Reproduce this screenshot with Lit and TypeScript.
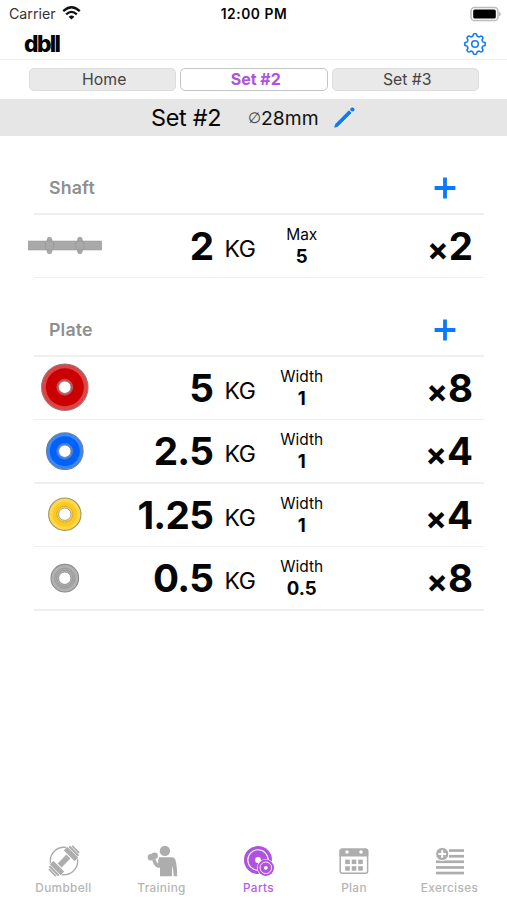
import { LitElement, html, css, svg } from "lit";
import { customElement, property } from "lit/decorators.js";
import { classMap } from "lit/directives/class-map.js";

interface Part {
  kind: "shaft" | "plate";
  weight: string;
  label: string;
  value: string;
  count: number;
  radius?: number;
  rim?: string;
  body?: string;
  edge?: string;
  core?: number;
}

const SHAFTS: Part[] = [{ kind: "shaft", weight: "2", label: "Max", value: "5", count: 2 }];

const PLATES: Part[] = [
  { kind: "plate", weight: "5", label: "Width", value: "1", count: 8, radius: 23.2, rim: "#dc4446", body: "#cb0003", edge: "#9b7474", core: 19 },
  { kind: "plate", weight: "2.5", label: "Width", value: "1", count: 4, radius: 18.3, rim: "#3b87f8", body: "#0062fb", edge: "#6c7f9d", core: 15 },
  { kind: "plate", weight: "1.25", label: "Width", value: "1", count: 4, radius: 16.2, rim: "#ffd84a", body: "#fdc91b", edge: "#a39670", core: 12.3 },
  { kind: "plate", weight: "0.5", label: "Width", value: "0.5", count: 8, radius: 13.8, rim: "#b2b2b2", body: "#a9a9a9", edge: "#8b8b8b", core: 10.2 },
];

const gearPath = (() => {
  const points: string[] = [];
  const steps = 128;
  for (let i = 0; i < steps; i++) {
    const a = (i / steps) * Math.PI * 2;
    const wave = Math.tanh(Math.cos(a * 8) * 2.2) / Math.tanh(2.2);
    const r = 9.15 + wave * 1.15;
    points.push(`${(12 + Math.sin(a) * r).toFixed(2)} ${(12 - Math.cos(a) * r).toFixed(2)}`);
  }
  return `M${points.join("L")}Z`;
})();

@customElement("part-icon")
export class PartIcon extends LitElement {
  @property({ attribute: false }) part!: Part;

  static styles = css`
    :host { display: block; height: 50px; }
    svg { display: block; }
  `;

  render() {
    const p = this.part;
    if (p.kind === "shaft") {
      return html`<svg width="76" height="50" viewBox="0 0 76 50">
        <g fill="#a9a9a9" stroke="#959595" stroke-width="0.7">
          <rect x="1.4" y="21.1" width="73" height="8.8" />
          <rect x="20.2" y="17.3" width="4.6" height="16.4" rx="2.2" />
          <rect x="50.6" y="17.3" width="4.6" height="16.4" rx="2.2" />
          <rect x="18.4" y="21.1" width="8.2" height="8.8" rx="2" />
          <rect x="48.8" y="21.1" width="8.2" height="8.8" rx="2" />
        </g>
      </svg>`;
    }
    return html`<svg width="76" height="50" viewBox="0 0 76 50">
      <circle cx="37.8" cy="25.2" r=${p.radius!} fill=${p.rim!} stroke=${p.edge!} stroke-width="1.1" />
      <circle cx="37.8" cy="25.2" r=${p.core!} fill=${p.body!} />
      ${p.weight === "0.5"
        ? svg`<circle cx="37.8" cy="25.2" r="10.2" fill="none" stroke="#969696" stroke-width="0.8" />`
        : null}
      <circle cx="37.8" cy="25.2" r="8" fill=${p.rim!} stroke=${p.edge!} stroke-width="0.6" />
      <circle cx="37.8" cy="25.2" r="6.2" fill="#fff" stroke=${p.edge!} stroke-width="0.9" />
    </svg>`;
  }
}

@customElement("part-section")
export class PartSection extends LitElement {
  @property() heading = "";
  @property({ attribute: false }) parts: Part[] = [];

  static styles = css`
    :host { display: block; }
    .head {
      display: flex; align-items: center; justify-content: space-between;
      height: 51px; padding: 26px 51.5px 0 49px; box-sizing: content-box;
    }
    .title { font-size: 17.8px; font-weight: 600; color: #8f8f8f; letter-spacing: 0.15px; }
    .add { display: block; }
    .line { height: 1.5px; margin: 0 23px 0 34px; background: #efefef; }
    .row {
      display: grid; grid-template-columns: 76px 110.8px 49.2px 78.5px 1fr;
      height: 62px; padding: 0 34.5px 0 26.5px;
    }
    .icon { padding-top: 5.5px; }
    .weight {
      text-align: right; font-weight: 700; font-size: 38.7px; line-height: 62px;
      white-space: nowrap; letter-spacing: -0.7px;
    }
    .unit { font-size: 23px; line-height: 69px; padding-left: 11.2px; letter-spacing: -0.3px; }
    .info { text-align: center; padding-top: 9px; }
    .label { font-size: 15.5px; line-height: 22px; }
    .value { font-size: 18.6px; line-height: 20px; font-weight: 700; }
    .count {
      display: flex; justify-content: flex-end; align-items: baseline;
      font-weight: 700; font-size: 38.5px; line-height: 62px; margin-right: -0.5px;
    }
    .times { font-size: 32px; transform: translateY(1px); }
  `;

  render() {
    return html`
      <div class="head">
        <span class="title">${this.heading}</span>
        <svg class="add" width="22" height="22" viewBox="0 0 22 22">
          <path d="M11 0.6V21.4M0.6 11H21.4" stroke="#087aff" stroke-width="3.8" />
        </svg>
      </div>
      <div class="line"></div>
      ${this.parts.map(
        (p) => html`
          <div class="row">
            <part-icon class="icon" .part=${p}></part-icon>
            <div class="weight">${p.weight}</div>
            <div class="unit">KG</div>
            <div class="info">
              <div class="label">${p.label}</div>
              <div class="value">${p.value}</div>
            </div>
            <div class="count"><span class="times">×</span><span>${p.count}</span></div>
          </div>
          <div class="line"></div>
        `
      )}
    `;
  }
}

const dumbbellIcon = svg`
  <circle cx="16" cy="16" r="13.7" fill="none" stroke="#adadad" stroke-width="1.4"/>
  <g transform="rotate(-45 16 16) translate(16 16) scale(0.94) translate(-16 -16)">
    <rect x="-2.5" y="7.4" width="12" height="17.2" fill="#fff"/>
    <rect x="22.5" y="7.4" width="12" height="17.2" fill="#fff"/>
    <g fill="#adadad">
      <rect x="9.4" y="13" width="13.2" height="6"/>
      <rect x="2.8" y="7.8" width="5.4" height="16.4" rx="0.6"/>
      <rect x="0" y="9" width="2.2" height="14" rx="0.5"/>
      <rect x="-2.4" y="10.7" width="1.8" height="10.6" rx="0.5"/>
      <rect x="23.8" y="7.8" width="5.4" height="16.4" rx="0.6"/>
      <rect x="29.8" y="9" width="2.2" height="14" rx="0.5"/>
      <rect x="32.6" y="10.7" width="1.8" height="10.6" rx="0.5"/>
    </g>
  </g>`;

const trainingIcon = svg`
  <g fill="#adadad">
    <circle cx="18.9" cy="5.9" r="5.2"/>
    <path d="M13.2 12.2H25.6Q28.7 12.2 29.5 15.3Q31.2 21.5 31.2 31.3H27.7Q27.6 24.7 26.2 20.5L26 31.3H14V22.4Q12.2 23.4 10.1 22Q7 19.5 6.2 15L9.3 13.8Q10.3 17.3 12 18.4Q12.5 17.6 12.2 14.8Z"/>
    <rect x="2.6" y="9.2" width="8" height="4.8" rx="1.8" transform="rotate(-20 6.6 11.6)"/>
    <circle cx="4.9" cy="12.3" r="3.2"/>
    <circle cx="8.6" cy="10.7" r="3.3"/>
  </g>`;

const partsIcon = svg`
  <circle cx="15" cy="15" r="14" fill="#af52de"/>
  <circle cx="15" cy="15" r="10.2" fill="none" stroke="#fff" stroke-width="1.1"/>
  <circle cx="15" cy="15" r="2.9" fill="#fff"/>
  <circle cx="22.8" cy="22.8" r="8.9" fill="#fff"/>
  <circle cx="22.8" cy="22.8" r="8.2" fill="#af52de"/>
  <circle cx="22.8" cy="22.8" r="5.8" fill="none" stroke="#fff" stroke-width="0.9"/>
  <circle cx="22.8" cy="22.8" r="1.9" fill="#fff"/>`;

const planIcon = svg`
  <rect x="2.2" y="4.3" width="27.4" height="24" rx="2" fill="none" stroke="#adadad" stroke-width="1.5"/>
  <path d="M1.5 11.5V5.7Q1.5 3.5 3.7 3.5H28.1Q30.3 3.5 30.3 5.7V11.5Z" fill="#adadad"/>
  <circle cx="9" cy="7" r="1.8" fill="#fff"/><circle cx="23" cy="7" r="1.8" fill="#fff"/>
  <g fill="#adadad">
    <rect x="7.2" y="14.6" width="4.6" height="4.5"/><rect x="13.7" y="14.6" width="4.6" height="4.5"/><rect x="20.2" y="14.6" width="4.6" height="4.5"/>
    <rect x="7.2" y="21.2" width="4.6" height="4.5"/><rect x="13.7" y="21.2" width="4.6" height="4.5"/><rect x="20.2" y="21.2" width="4.6" height="4.5"/>
  </g>`;

const exercisesIcon = svg`
  <g fill="#adadad">
    <rect x="15" y="4.2" width="15" height="2.7"/><rect x="15" y="9.9" width="15" height="2.7"/>
    <rect x="2" y="15.4" width="28" height="2.7"/><rect x="2" y="21.1" width="28" height="2.7"/><rect x="2" y="26.7" width="28" height="2.7"/>
    <circle cx="8.2" cy="9" r="6.6" stroke="#fff" stroke-width="1"/>
  </g>
  <path d="M8.2 5.2V12.8M4.4 9H12" stroke="#fff" stroke-width="2"/>`;

const NAV = [
  { name: "Dumbbell", icon: dumbbellIcon },
  { name: "Training", icon: trainingIcon },
  { name: "Parts", icon: partsIcon },
  { name: "Plan", icon: planIcon },
  { name: "Exercises", icon: exercisesIcon },
];

@customElement("app-root")
export class AppRoot extends LitElement {
  static styles = css`
    :host {
      display: flex; flex-direction: column; height: 900px; overflow: hidden;
      background: #fff; color: #050505; font-family: Inter, "Liberation Sans", sans-serif;
    }
    svg { display: block; }
    .status {
      display: grid; grid-template-columns: 1fr auto 1fr; align-items: center;
      height: 28px; padding: 0 6px 0 9px;
    }
    .carrier { display: flex; align-items: center; gap: 6px; color: #333; font-size: 14.2px; margin-top: -2px; }
    .time { font-weight: 600; font-size: 13.8px; letter-spacing: 0.55px; padding-right: 2px; }
    .battery { justify-self: end; margin-top: -1px; }
    .bar {
      display: flex; align-items: center; justify-content: space-between;
      height: 32px; padding: 0 20px 0 24px; border-bottom: 1px solid #efefef;
      box-sizing: border-box;
    }
    .logo { font-size: 22.8px; font-weight: 800; letter-spacing: -1.65px; line-height: 31px; margin-top: -1px; }
    .tabs { display: grid; grid-template-columns: repeat(3, 1fr); gap: 4px; padding: 8px 28px 8px 28.5px; }
    .tab {
      height: 23px; box-sizing: border-box; border: 1px solid #dcdcdc; border-radius: 5px;
      background: #e9e9e9; color: #444; text-align: center; font-size: 15.8px; line-height: 21px;
      padding-left: 4px;
    }
    .tab.active { background: #fff; border-color: #c4c4c4; color: #af52de; font-weight: 700; font-size: 16px; }
    .summary { display: flex; align-items: center; height: 37px; background: #e6e6e6; padding-left: 151px; }
    .name { font-size: 23.4px; width: 97px; white-space: nowrap; letter-spacing: -0.3px; }
    .size { display: flex; align-items: center; font-size: 19.3px; width: 86px; white-space: nowrap; color: #111; }
    .dia { font-family: "DejaVu Sans", sans-serif; font-size: 15px; color: #444; }
    .gap { flex: 1; }
    .nav { display: grid; grid-template-columns: 97px 99px 95px 96px 95px; padding-left: 15px; height: 55px; }
    .item { display: flex; flex-direction: column; align-items: center; color: #b5b5b5; }
    .item.on { color: #b45ee0; }
    .caption { margin-top: 4px; font-size: 11.8px; line-height: 15px; font-weight: 500; letter-spacing: 0.35px; }
    .glyph { overflow: visible; }
  `;

  render() {
    return html`
      <div class="status">
        <div class="carrier">
          <span>Carrier</span>
          <svg width="19" height="14" viewBox="0 0 19 14" fill="none" stroke="#111" stroke-width="2.3">
            <path d="M1.2 5.2Q9.5 -2.6 17.8 5.2" />
            <path d="M4.2 8.3Q9.5 3.4 14.8 8.3" />
            <path d="M9.5 13.6L6.6 10.7Q9.5 8.3 12.4 10.7Z" fill="#111" stroke="none" />
          </svg>
        </div>
        <div class="time">12:00 PM</div>
        <svg class="battery" width="31" height="16" viewBox="0 0 31 16">
          <rect x="1" y="1.5" width="27" height="13" rx="3.6" fill="#fff" stroke="#bcbcbc" stroke-width="1.5" />
          <rect x="3.2" y="3.5" width="22.6" height="9" rx="1.6" fill="#000" />
          <path d="M29 5.7Q30.8 6.3 30.8 8T29 10.3Z" fill="#bcbcbc" />
        </svg>
      </div>
      <div class="bar">
        <div class="logo">dbll</div>
        <svg width="24" height="24" viewBox="0 0 24 24" fill="none" stroke="#167cf4">
          <path d=${gearPath} stroke-width="1.6" stroke-linejoin="round" />
          <circle cx="12" cy="12" r="3.3" stroke-width="1.6" />
        </svg>
      </div>
      <div class="tabs">
        ${["Home", "Set #2", "Set #3"].map(
          (t) => html`<div class=${classMap({ tab: true, active: t === "Set #2" })}>${t}</div>`
        )}
      </div>
      <div class="summary">
        <div class="name">Set #2</div>
        <div class="size"><span class="dia">∅</span>28mm</div>
        <svg width="21" height="21" viewBox="0 0 21 21" fill="#087aff">
          <path d="M14.9 3.8L17 5.9L3.8 19L0.8 20.2L1.8 17Z" stroke="#087aff" stroke-width="1" stroke-linejoin="round" />
          <circle cx="18.4" cy="2.5" r="2.1" />
        </svg>
      </div>
      <part-section heading="Shaft" .parts=${SHAFTS}></part-section>
      <part-section heading="Plate" .parts=${PLATES}></part-section>
      <div class="gap"></div>
      <div class="nav">
        ${NAV.map(
          (n) => html`<div class=${classMap({ item: true, on: n.name === "Parts" })}>
            <svg class="glyph" width="32" height="32" viewBox="0 0 32 32">${n.icon}</svg>
            <div class="caption">${n.name}</div>
          </div>`
        )}
      </div>
    `;
  }
}
